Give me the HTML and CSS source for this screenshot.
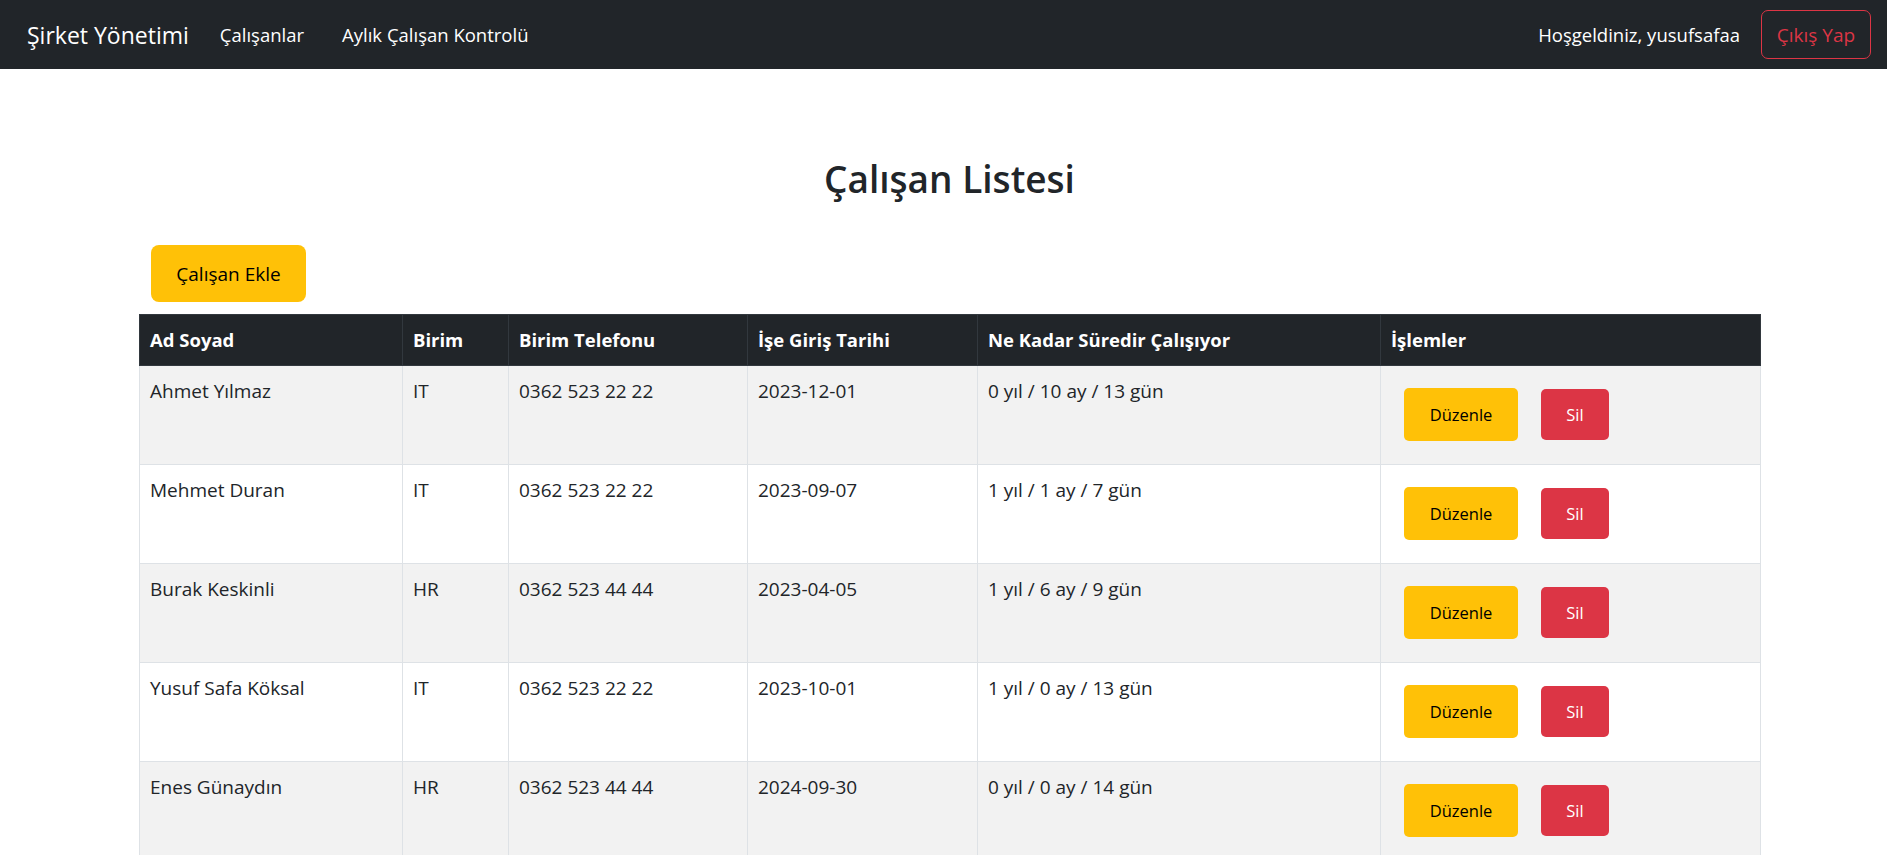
FILE: index.html
```html
<!DOCTYPE html>
<html lang="tr">
<head>
<meta charset="utf-8">
<title>Çalışan Listesi</title>
<link rel="stylesheet" href="styles.css">
</head>
<body>
<nav class="navbar">
  <div class="nav-left">
    <a class="brand" href="#">Şirket Yönetimi</a>
    <a class="nav-link first" href="#">Çalışanlar</a>
    <a class="nav-link" href="#">Aylık Çalışan Kontrolü</a>
  </div>
  <div class="nav-right">
    <span class="welcome">Hoşgeldiniz, yusufsafaa</span>
    <a class="btn-logout" href="#">Çıkış Yap</a>
  </div>
</nav>
<main class="content">
  <h1 class="title">Çalışan Listesi</h1>
  <a class="btn-add" href="#">Çalışan Ekle</a>
  <table class="emp-table">
    <colgroup>
      <col class="c1"><col class="c2"><col class="c3"><col class="c4"><col class="c5"><col class="c6">
    </colgroup>
    <thead>
      <tr><th>Ad Soyad</th><th>Birim</th><th>Birim Telefonu</th><th>İşe Giriş Tarihi</th><th>Ne Kadar Süredir Çalışıyor</th><th>İşlemler</th></tr>
    </thead>
    <tbody>
      <tr><td>Ahmet Yılmaz</td><td>IT</td><td>0362 523 22 22</td><td>2023-12-01</td><td>0 yıl / 10 ay / 13 gün</td><td class="act"><div class="actions"><a class="btn-edit" href="#">Düzenle</a><button class="btn-del">Sil</button></div></td></tr>
      <tr><td>Mehmet Duran</td><td>IT</td><td>0362 523 22 22</td><td>2023-09-07</td><td>1 yıl / 1 ay / 7 gün</td><td class="act"><div class="actions"><a class="btn-edit" href="#">Düzenle</a><button class="btn-del">Sil</button></div></td></tr>
      <tr><td>Burak Keskinli</td><td>HR</td><td>0362 523 44 44</td><td>2023-04-05</td><td>1 yıl / 6 ay / 9 gün</td><td class="act"><div class="actions"><a class="btn-edit" href="#">Düzenle</a><button class="btn-del">Sil</button></div></td></tr>
      <tr><td>Yusuf Safa Köksal</td><td>IT</td><td>0362 523 22 22</td><td>2023-10-01</td><td>1 yıl / 0 ay / 13 gün</td><td class="act"><div class="actions"><a class="btn-edit" href="#">Düzenle</a><button class="btn-del">Sil</button></div></td></tr>
      <tr><td>Enes Günaydın</td><td>HR</td><td>0362 523 44 44</td><td>2024-09-30</td><td>0 yıl / 0 ay / 14 gün</td><td class="act"><div class="actions"><a class="btn-edit" href="#">Düzenle</a><button class="btn-del">Sil</button></div></td></tr>
    </tbody>
  </table>
</main>
</body>
</html>
```
FILE: styles.css
```css
* { box-sizing: border-box; }
html, body { margin: 0; padding: 0; }
body {
  font-family: "Open Sans", "Noto Sans", sans-serif;
  font-size: 19px;
  line-height: 30px;
  color: #212529;
  background: #fff;
}
a { text-decoration: none; }

.navbar {
  height: 69px;
  background: #212529;
  display: flex;
  align-items: center;
  justify-content: space-between;
  padding: 0 16px 0 27px;
}
.nav-left, .nav-right { display: flex; align-items: center; }
.brand { color: #fff; font-size: 23px; margin-right: 31px; }
.nav-link { color: #fff; font-size: 18.5px; margin-right: 38px; }
.welcome { color: #fff; font-size: 18.5px; margin-right: 21px; }
.btn-logout {
  color: #dc3545;
  border: 1px solid #dc3545;
  border-radius: 7px;
  height: 49px;
  width: 110px;
  display: flex;
  align-items: center;
  justify-content: center;
  font-size: 19px;
}

.content {
  margin-left: 139px;
  width: 1621px;
  display: flex;
  flex-direction: column;
  align-items: flex-start;
}
.title {
  align-self: stretch;
  text-align: center;
  font-size: 37px;
  font-weight: 600;
  line-height: 48px;
  margin: 86px 0 42px;
}
.btn-add {
  margin-left: 12px;
  width: 155px;
  height: 57px;
  background: #ffc107;
  color: #000;
  border-radius: 8px;
  display: flex;
  align-items: center;
  justify-content: center;
  font-size: 19px;
  margin-bottom: 12px;
}

.emp-table {
  width: 1621px;
  border-collapse: collapse;
  table-layout: fixed;
}
.c1 { width: 263px; }
.c2 { width: 106px; }
.c3 { width: 239px; }
.c4 { width: 230px; }
.c5 { width: 403px; }
.c6 { width: 380px; }
.emp-table th {
  background: #212529;
  color: #fff;
  text-align: left;
  font-weight: 700;
  font-size: 18.5px;
  padding: 10px;
  border: 1px solid #32383e;
  height: 51px;
}
.emp-table td {
  padding: 10px;
  border: 1px solid #dee2e6;
  vertical-align: top;
  height: 99px;
}
.emp-table tbody tr:nth-child(odd) td { background: #f2f2f2; }
.emp-table td.act { padding: 0 10px; vertical-align: middle; }
.actions {
  display: flex;
  align-items: center;
  gap: 23px;
  padding-left: 13px;
  padding-bottom: 1px;
}
.btn-edit {
  width: 114px;
  height: 53px;
  background: #ffc107;
  color: #000;
  border-radius: 5px;
  display: flex;
  align-items: center;
  justify-content: center;
  font-size: 16.5px;
}
.btn-del {
  width: 68px;
  height: 51px;
  background: #dc3545;
  color: #fff;
  border: none;
  border-radius: 5px;
  font-family: inherit;
  font-size: 16.5px;
  padding: 0;
}
```
